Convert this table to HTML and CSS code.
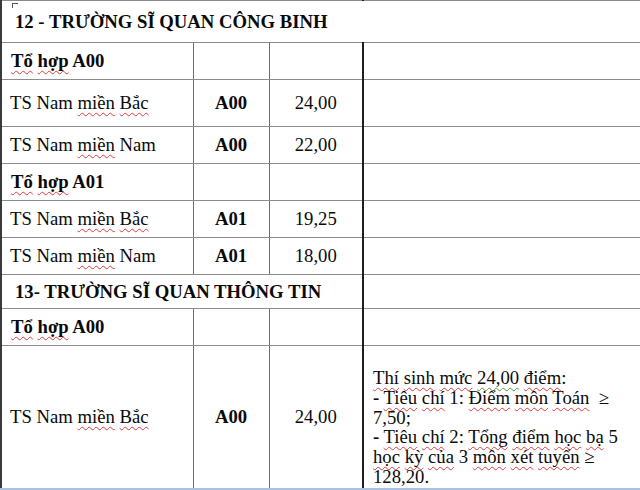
FILE: index.html
```html
<!DOCTYPE html>
<html lang="vi">
<head>
<meta charset="utf-8">
<title>Điểm chuẩn</title>
<link rel="stylesheet" href="styles.css">
</head>
<body>
<div class="page">
  <span class="handle"></span>
  <table class="grid">
    <colgroup>
      <col class="c1"><col class="c2"><col class="c3"><col class="c4">
    </colgroup>
    <tr class="stub"><td></td><td></td><td></td><td class="note"></td></tr>
    <tr class="r42"><td colspan="4" class="school">12 - TRƯỜNG SĨ QUAN CÔNG BINH</td></tr>
    <tr class="r37"><td class="group"><span class="sp">Tổ</span> <span class="sp">hợp</span> A00</td><td></td><td></td><td class="note"></td></tr>
    <tr class="r47"><td class="name">TS Nam <span class="sp">miền</span> <span class="sp">Bắc</span></td><td class="code">A00</td><td class="score">24,00</td><td class="note"></td></tr>
    <tr class="r37"><td class="name">TS Nam <span class="sp">miền</span> Nam</td><td class="code">A00</td><td class="score">22,00</td><td class="note"></td></tr>
    <tr class="r37"><td class="group"><span class="sp">Tổ</span> <span class="sp">hợp</span> A01</td><td></td><td></td><td class="note"></td></tr>
    <tr class="r37"><td class="name">TS Nam <span class="sp">miền</span> <span class="sp">Bắc</span></td><td class="code">A01</td><td class="score">19,25</td><td class="note"></td></tr>
    <tr class="r37"><td class="name">TS Nam <span class="sp">miền</span> Nam</td><td class="code">A01</td><td class="score">18,00</td><td class="note"></td></tr>
    <tr class="r34"><td colspan="3" class="school">13- TRƯỜNG SĨ QUAN THÔNG TIN</td><td class="note"></td></tr>
    <tr class="r37"><td class="group"><span class="sp">Tổ</span> <span class="sp">hợp</span> A00</td><td></td><td></td><td class="note"></td></tr>
    <tr class="rlast"><td class="name">TS Nam <span class="sp">miền</span> <span class="sp">Bắc</span></td><td class="code">A00</td><td class="score">24,00</td><td class="note criteria"><span class="sp">Thí</span> <span class="sp">sinh</span> <span class="sp">mức</span> <span class="gr">24,00</span> <span class="sp">điểm</span>:<br><b>-</b> <span class="sp">Tiêu</span> <span class="sp">chí</span> 1: <span class="sp">Điểm</span> <span class="sp">môn</span> <span class="sp">Toán</span>&nbsp; ≥<br>7,50;<br><b>-</b> <span class="sp">Tiêu</span> <span class="sp">chí</span> 2: <span class="sp">Tổng</span> <span class="sp">điểm</span> <span class="sp">học</span> <span class="sp">bạ</span> 5<br><span class="sp">học</span> <span class="sp">kỳ</span> <span class="sp">của</span> 3 <span class="sp">môn</span> <span class="sp">xét</span> <span class="sp">tuyển</span> ≥<br>128,20.</td></tr>
  </table>
  <div class="frame"></div>
</div>
</body>
</html>
```
FILE: styles.css
```css
html, body {
  margin: 0;
  padding: 0;
  background: #ffffff;
}
body {
  width: 640px;
  height: 490px;
  overflow: hidden;
  font-family: "Liberation Serif", "Times New Roman", serif;
  font-size: 18.7px;
  color: #0a0a0a;
}
.page {
  position: relative;
  width: 640px;
  height: 490px;
  overflow: hidden;
}
.handle {
  position: absolute;
  left: 12px;
  top: 3px;
  width: 5px;
  height: 4px;
  border-left: 1px solid #555;
  border-top: 1px solid #555;
}
.grid {
  border-collapse: collapse;
  table-layout: fixed;
  width: 680px;
  border-left: 2px solid #3a3a3a;
}
.c1 { width: 192px; }
.c2 { width: 76px; }
.c3 { width: 94px; }
.c4 { width: 318px; }
.grid td {
  padding: 0;
  border-top: 1px solid #8c8c8c;
  border-bottom: 1px solid #8c8c8c;
  border-left: 1px solid #6e6e6e;
  vertical-align: middle;
  line-height: 20px;
  white-space: nowrap;
}
.grid td.note {
  border-left: 2px solid #1e1e1e;
}
.grid td:first-child {
  border-left: 2px solid #3a3a3a;
}
.stub td { height: 0; border-top: none; }
.r42 td { height: 41px; }
.r37 td { height: 36px; }
.r47 td { height: 46px; }
.r34 td { height: 33px; }
.rlast td { height: 142px; }
.rlast td.criteria { height: 120px; }
.school {
  font-weight: bold;
  padding-left: 13px !important;
}
.group {
  font-weight: bold;
  padding-left: 9px !important;
}
.name {
  padding-left: 8px !important;
}
.code {
  font-weight: bold;
  text-align: center;
}
.score {
  text-align: center;
}
.criteria {
  vertical-align: top !important;
  padding: 22px 0 0 9px !important;
  line-height: 19.8px !important;
}
.sp {
  text-decoration: underline wavy #e23a3a;
  text-decoration-thickness: 1px;
  text-underline-offset: 3px;
  text-decoration-skip-ink: none;
}
.gr {
  text-decoration: underline wavy #5a9a3a;
  text-decoration-thickness: 1px;
  text-underline-offset: 3px;
  text-decoration-skip-ink: none;
}
.frame {
  position: absolute;
  left: 0;
  right: 0;
  bottom: 0;
  height: 2px;
  background: #a9c1e3;
}
```
